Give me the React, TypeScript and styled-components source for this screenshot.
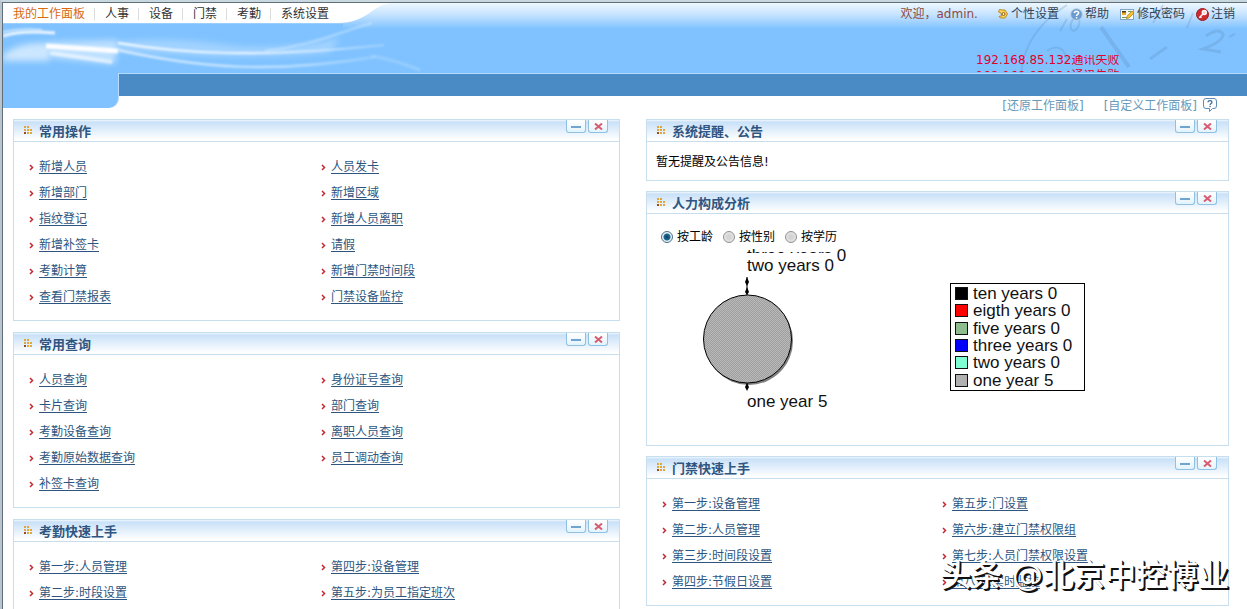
import React, { useState } from "react";
import styled, { createGlobalStyle } from "styled-components";

const GlobalStyle = createGlobalStyle`
  *, *::before, *::after { box-sizing: border-box; }
  body {
    margin: 0;
    background: #fff;
    color: #000;
    font: 12px/20px "DejaVu Sans", "Noto Sans CJK SC", sans-serif;
  }
  ul, h2, p, fieldset { margin: 0; padding: 0; border: 0; }
  ul { list-style: none; }
`;

const Frame = styled.div`
  height: 100vh;
  overflow: hidden;
  position: relative;
  border-top: 2px solid #c9d7de;
  border-left: 2px solid #b9c4cd;
`;

const Sheet = styled.div`
  min-height: 100%;
  border-top: 1px solid #5f707a;
  border-left: 1px solid #5f6e7c;
`;

const Header = styled.header`
  position: relative;
`;

const HeaderTop = styled.div`
  height: 70px;
  overflow: hidden;
  background: linear-gradient(#eff8ff 0, #c4e2ff 12px, #7fc2ff 26px, #7fc2ff);
`;

const LeftArt = styled.svg`
  position: absolute;
  left: 0;
  top: 0;
`;

const RightArt = styled.svg`
  position: absolute;
  right: 0;
  top: 0;
`;

const TopRow = styled.div`
  position: relative;
  display: flex;
  justify-content: space-between;
  height: 21px;
  padding: 1px 12px 0 0;
`;

const MainNav = styled.nav`
  display: flex;
  align-items: center;
`;

const NavLink = styled.a<{ $active?: boolean }>`
  display: block;
  padding: 0 9px 0 10px;
  line-height: 12px;
  color: ${(p) => (p.$active ? "#d8690f" : "#333")};
  text-decoration: none;
  & + & { border-left: 1px solid #dcdcdc; }
`;

const UserBar = styled.div`
  display: flex;
  align-items: center;
  gap: 11px;
`;

const Welcome = styled.span`
  color: #8c4a42;
  margin-right: 8px;
`;

const UserLink = styled.a`
  display: flex;
  align-items: center;
  gap: 2px;
  color: #2f4458;
  text-decoration: none;
`;

const Alerts = styled.ul`
  position: relative;
  width: 260px;
  height: 17px;
  margin: 31px 11px 0 auto;
  overflow: hidden;
  color: #e3002b;
  line-height: 15px;
  li { margin-top: -2px; height: 18px; }
`;

const BarRow = styled.div`
  position: relative;
  display: flex;
`;

const BrandTab = styled.div`
  width: 116px;
  height: 35px;
  background: #7fc2ff;
  border-right: 1px solid #b5dcff;
  border-bottom-right-radius: 10px;
`;

const BarColumn = styled.div`
  flex: 1;
`;

const SubBar = styled.div`
  height: 23px;
  border-top: 1px solid #b3daff;
  background: #4a8bc6;
`;

const BoardActions = styled.div`
  display: flex;
  height: 23px;
  padding-right: 30px;
  justify-content: flex-end;
`;

const BoardLink = styled.a`
  margin-right: 20px;
  color: #6899b9;
  text-decoration: none;
  &:last-of-type { margin-right: 6px; }
`;

const IconButton = styled.button`
  display: block;
  width: 14px;
  height: 14px;
  margin-top: 2px;
  padding: 0;
  border: 0;
  background: none;
  svg { display: block; }
`;

const Board = styled.main`
  display: grid;
  grid-template-columns: 607fr 583fr;
  gap: 26px;
  padding: 0 18px 0 10px;
`;

const Column = styled.div<{ $gap: number }>`
  display: flex;
  flex-direction: column;
  gap: ${(p) => p.$gap}px;
  min-width: 0;
`;

const PanelBox = styled.section`
  border: 1px solid #c6deee;
`;

const PanelHead = styled.header`
  display: flex;
  align-items: flex-start;
  height: 22px;
  padding: 0 11px 0 10px;
  border-bottom: 1px solid #c6deee;
  background: linear-gradient(#f0f7fe 0, #c9e1f8 2px, #fff 20px);
`;

const PanelTitle = styled.h2`
  flex: 1;
  display: flex;
  gap: 6px;
  color: #2f5580;
  font-size: 13px;
  line-height: 24px;
  svg { margin-top: 6px; }
`;

const WindowButton = styled.button`
  display: flex;
  align-items: center;
  justify-content: center;
  width: 20px;
  height: 13px;
  margin-left: 2px;
  padding: 1px 0 0;
  border: 1px solid #8fc1e3;
  border-top: 0;
  border-radius: 0 0 3px 3px;
  background: linear-gradient(#fff, #e3f3fd);
`;

const LinkGrid = styled.ul`
  display: grid;
  grid-template-columns: 1fr 1fr;
  grid-auto-rows: 26px;
  padding: 12px 6px 10px 15px;
`;

const LinkItem = styled.li`
  display: flex;
  align-items: center;
  gap: 5px;
  line-height: 26px;
`;

const ShortcutLink = styled.a`
  color: #2d5580;
  text-decoration: underline;
  text-underline-offset: 2px;
`;

const Notice = styled.p`
  padding: 10px 9px 8px;
`;

const Analysis = styled.div`
  padding: 13px 14px 0;
`;

const RadioRow = styled.fieldset`
  display: flex;
  gap: 10px;
`;

const RadioLabel = styled.label`
  display: flex;
  align-items: center;
  gap: 4px;
`;

const Radio = styled.input`
  appearance: none;
  width: 12px;
  height: 12px;
  margin: 0;
  border: 1px solid #8e8f8f;
  border-radius: 50%;
  background: radial-gradient(#d4d4d4 30%, #f4f4f4);
  &:checked {
    border-color: #4d6f86;
    background: radial-gradient(#0f3f5e 0, #1c6a97 3px, #e6f1f7 4px);
  }
`;

const ChartRow = styled.div`
  display: flex;
  height: 198px;
  svg { display: block; flex: none; }
`;

const Legend = styled.ul`
  display: grid;
  grid-auto-rows: 1fr;
  flex: none;
  width: 135px;
  height: 108px;
  margin: 36px 0 0 49px;
  padding: 1px 4px;
  border: 1px solid #000;
  font-family: "Liberation Sans", sans-serif;
  font-size: 17px;
  color: #111;
`;

const LegendItem = styled.li`
  display: flex;
  align-items: center;
  gap: 5px;
  min-height: 0;
  line-height: 17px;
  white-space: nowrap;
`;

const Swatch = styled.span<{ $color: string }>`
  width: 13px;
  height: 13px;
  border: 1px solid #111;
  background: ${(p) => p.$color};
`;

const Watermark = styled.div`
  position: absolute;
  right: 18px;
  bottom: 14px;
  color: #fff;
  font: 500 31px/40px "DejaVu Sans", "Noto Sans CJK SC", sans-serif;
  text-shadow: 1px 1px 0 #111, 2px 2px 0 #111;
  white-space: nowrap;
  pointer-events: none;
`;

const DotsIcon = () => (
  <svg width="9" height="9" viewBox="0 0 9 9" aria-hidden="true">
    <g fill="#e3a63c">
      <rect x="0" y="0" width="2" height="2" />
      <rect x="3" y="0" width="2" height="2" />
      <rect x="0" y="3" width="2" height="2" />
      <rect x="3" y="3" width="2" height="2" />
      <rect x="6" y="3" width="2" height="2" />
      <rect x="3" y="6" width="2" height="2" />
      <rect x="6" y="6" width="2" height="2" />
    </g>
    <rect x="0" y="6" width="2" height="2" fill="#9c4a1c" />
  </svg>
);

const Chevron = () => (
  <svg width="5" height="7" viewBox="0 0 5 7" aria-hidden="true">
    <path d="M1 1 L3.5 3.5 L1 6" fill="none" stroke="#c22a35" strokeWidth="1.5" />
  </svg>
);

const GearIcon = () => (
  <svg width="12" height="12" viewBox="0 0 12 12" aria-hidden="true">
    <path d="M2.500 1.500 L5 2 L8 2 L10.500 6 L8 10 L3.500 10 L2 8.500 L4.500 8 L4 5 L1.500 4z" fill="#ffd45a" stroke="#bd8a1c" />
    <circle cx="6.500" cy="6" r="1.500" fill="#fff3c4" stroke="#8f5f10" />
  </svg>
);

const HelpIcon = () => (
  <svg width="13" height="13" viewBox="0 0 13 13" aria-hidden="true">
    <circle cx="6.5" cy="6.5" r="5.8" fill="#6b9cd0" stroke="#b9cfe4" />
    <path d="M4.4 5 C4.4 2.6 8.6 2.6 8.6 5 C8.6 6.4 6.5 6.3 6.5 8" fill="none" stroke="#fff" strokeWidth="1.5" />
    <rect x="5.8" y="9" width="1.5" height="1.5" fill="#fff" />
  </svg>
);

const PasswordIcon = () => (
  <svg width="15" height="13" viewBox="0 0 15 13" aria-hidden="true">
    <rect x="0.5" y="1.5" width="13" height="10" fill="#f8fbf0" stroke="#7fa3c8" />
    <rect x="2" y="3" width="4" height="4" fill="#f0a92c" />
    <path d="M2 3h4v1.500h-4z" fill="#4d3a1c" />
    <path d="M2 9.5h5M8 3.5h4" stroke="#74975c" />
    <path d="M6.5 10.5 L7.2 8 L12 3 L14 5 L9 10z" fill="#f8c535" stroke="#b98219" strokeWidth="0.8" />
  </svg>
);

const LogoutIcon = () => (
  <svg width="13" height="13" viewBox="0 0 13 13" aria-hidden="true">
    <circle cx="6.5" cy="6.5" r="6" fill="#cf2b2f" stroke="#9b1c22" />
    <circle cx="8.3" cy="4.5" r="2" fill="#f7c9cb" stroke="#fff" strokeWidth="1.4" />
    <path d="M7 6 L3.2 9.7 M4.2 8.6 L5.4 9.8" stroke="#fff" strokeWidth="1.4" />
  </svg>
);

const BubbleIcon = () => (
  <svg width="14" height="14" viewBox="0 0 14 14" aria-hidden="true">
    <path d="M3 .5h8q2.5 0 2.5 2.5v5q0 2.5-2.500 2.5H9.500L6.500 13.500V10.500H3Q.5 10.500 .5 8V3Q.5 .5 3 .5z" fill="#fff" stroke="#5c8db8" />
    <path d="M5 4.200 C5 2 9 2 9 4.200 C9 5.500 7 5.300 7 7" fill="none" stroke="#35658f" strokeWidth="1.2" />
    <rect x="6.4" y="7.8" width="1.3" height="1.3" fill="#35658f" />
  </svg>
);

const SwooshArt = () => (
  <LeftArt width="460" height="105" viewBox="3 3 460 105" aria-hidden="true">
    <defs>
      <filter id="soft" x="-20%" y="-100%" width="140%" height="300%">
        <feGaussianBlur stdDeviation="3" />
      </filter>
      <filter id="fine" x="-20%" y="-100%" width="140%" height="300%">
        <feGaussianBlur stdDeviation="0.8" />
      </filter>
      <linearGradient id="fade" gradientUnits="userSpaceOnUse" x1="118" y1="0" x2="385" y2="0">
        <stop offset="0" stopColor="#fff" />
        <stop offset="0.6" stopColor="#dff0ff" />
        <stop offset="1" stopColor="#dff0ff" stopOpacity="0.3" />
      </linearGradient>
    </defs>
    <rect x="3" y="24" width="340" height="49" fill="#7fc2ff" />
    <path d="M3 3 H392 C372 4 368 23 338 23 H3z" fill="#fff" />
    <g fill="none" stroke="#fff">
      <path d="M3 54 Q25 40 50 44 V61 H3z" fill="#fff" stroke="none" opacity="0.6" filter="url(#soft)" />
      <path d="M48 42 L118 40 L115 64 L52 58z" fill="#fff" stroke="none" opacity="0.5" filter="url(#soft)" />
      <path d="M118 42 Q170 36 235 46 Q290 50 340 38 L330 52 Q240 62 118 50z" fill="#fff" stroke="none" opacity="0.28" filter="url(#soft)" />
      <path d="M3 36 Q20 30 55 33" strokeWidth="3" opacity="0.85" filter="url(#fine)" />
      <path d="M3 32 Q20 28 42 30" strokeWidth="1.5" opacity="0.7" filter="url(#fine)" />
      <path d="M46 46 L118 51" strokeWidth="5" opacity="0.95" filter="url(#fine)" />
      <path d="M50 53 Q80 57 112 62" strokeWidth="4" opacity="0.6" filter="url(#fine)" />
      <path d="M118 43 C185 54 260 58 384 45" stroke="url(#fade)" strokeWidth="2.2" filter="url(#fine)" />
      <path d="M118 50 C200 68 270 74 375 57" stroke="url(#fade)" strokeWidth="2.5" opacity="0.65" filter="url(#fine)" />
      <path d="M265 51 C310 46 340 32 372 23" strokeWidth="2" opacity="0.35" filter="url(#fine)" />
      <path d="M372 56 Q395 60 420 70" strokeWidth="3" opacity="0.18" filter="url(#fine)" />
    </g>
  </LeftArt>
);

const ClockArt = () => (
  <RightArt width="260" height="70" viewBox="0 0 260 70" aria-hidden="true">
    <g fill="none" stroke="#5f86b4" opacity="0.25">
      <path d="M34 70 Q38 28 80 2" strokeWidth="2" />
      <path d="M114 24 L142 64" strokeWidth="4" />
      <path d="M163 56 L180 44" strokeWidth="3" />
      <path d="M60 48 Q75 38 80 56" strokeWidth="2" />
      <ellipse cx="88" cy="21" rx="4" ry="7" transform="rotate(20 88 21)" strokeWidth="2" />
      <path d="M80 16 L73 28" strokeWidth="2" />
      <path d="M166 20 L176 2 M206 10 L200 25" strokeWidth="2" />
      <path d="M219 33 Q232 24 236 31 Q237 38 216 46 L234 49" strokeWidth="3" />
      <path d="M242 34 L248 31" strokeWidth="2" />
    </g>
  </RightArt>
);

const PieChart = () => (
  <svg width="240" height="198" viewBox="661 248 240 198" role="img" aria-label="one year 5">
    <defs>
      <pattern id="dither" width="2" height="2" patternUnits="userSpaceOnUse">
        <rect width="2" height="2" fill="#b9b9b9" />
        <rect width="1" height="1" fill="#9f9f9f" />
        <rect x="1" y="1" width="1" height="1" fill="#9f9f9f" />
      </pattern>
    </defs>
    <g fontFamily="Liberation Sans, sans-serif" fontSize="17" fill="#111">
      <text x="747" y="262">three years 0</text>
      <rect x="747" y="254" width="89" height="20" fill="#fff" />
      <text x="747" y="272">two years 0</text>
      <text x="747" y="408">one year 5</text>
    </g>
    <circle cx="749" cy="342" r="44" fill="#808080" />
    <circle cx="747.5" cy="340" r="44" fill="url(#dither)" stroke="#000" />
    <path d="M747 278 V296 M747 384 V390" stroke="#000" />
    <path d="M747 278l2 5-2 4-2-4zM747 288l2 5-2 3-2-3zM747 384l2 4-2 4-2-4z" fill="#000" />
  </svg>
);

function Panel({ title, children }: { title: string; children: React.ReactNode }) {
  return (
    <PanelBox>
      <PanelHead>
        <PanelTitle>
          <DotsIcon />
          {title}
        </PanelTitle>
        <WindowButton type="button" aria-label="最小化">
          <svg width="10" height="2" aria-hidden="true">
            <rect width="10" height="2" fill="#6fa5ce" />
          </svg>
        </WindowButton>
        <WindowButton type="button" aria-label="关闭">
          <svg width="9" height="7" viewBox="0 0 9 7" aria-hidden="true">
            <path d="M1 .5 L8 6.5 M8 .5 L1 6.5" stroke="#d95d70" strokeWidth="2" />
          </svg>
        </WindowButton>
      </PanelHead>
      {children}
    </PanelBox>
  );
}

function Shortcuts({ left, right }: { left: string[]; right: string[] }) {
  const cells = left.flatMap((name, i) => [name, right[i]]).filter(Boolean);
  return (
    <LinkGrid>
      {cells.map((name) => (
        <LinkItem key={name}>
          <Chevron />
          <ShortcutLink href="#">{name}</ShortcutLink>
        </LinkItem>
      ))}
    </LinkGrid>
  );
}

const navItems = ["我的工作面板", "人事", "设备", "门禁", "考勤", "系统设置"];

const legend = [
  { label: "ten years 0", color: "#000" },
  { label: "eigth years 0", color: "#f00" },
  { label: "five years 0", color: "#8fbc8f" },
  { label: "three years 0", color: "#00f" },
  { label: "two years 0", color: "#7fffd4" },
  { label: "one year 5", color: "#b0b0b0" },
];

const groupings = ["按工龄", "按性别", "按学历"];

export default function App() {
  const [grouping, setGrouping] = useState(groupings[0]);

  return (
    <>
      <GlobalStyle />
      <Frame>
        <Sheet>
          <Header>
            <HeaderTop>
              <SwooshArt />
              <ClockArt />
              <TopRow>
                <MainNav>
                  {navItems.map((item, i) => (
                    <NavLink key={item} href="#" $active={i === 0}>
                      {item}
                    </NavLink>
                  ))}
                </MainNav>
                <UserBar>
                  <Welcome>欢迎，admin.</Welcome>
                  <UserLink href="#"><GearIcon />个性设置</UserLink>
                  <UserLink href="#"><HelpIcon />帮助</UserLink>
                  <UserLink href="#"><PasswordIcon />修改密码</UserLink>
                  <UserLink href="#"><LogoutIcon />注销</UserLink>
                </UserBar>
              </TopRow>
              <Alerts>
                <li>192.168.85.132通讯失败</li>
                <li>192.168.85.134通讯失败</li>
              </Alerts>
            </HeaderTop>
            <BarRow>
              <BrandTab />
              <BarColumn>
                <SubBar />
                <BoardActions>
                  <BoardLink href="#">[还原工作面板]</BoardLink>
                  <BoardLink href="#">[自定义工作面板]</BoardLink>
                  <IconButton type="button" aria-label="帮助"><BubbleIcon /></IconButton>
                </BoardActions>
              </BarColumn>
            </BarRow>
          </Header>
          <Board>
            <Column $gap={11}>
              <Panel title="常用操作">
                <Shortcuts
                  left={["新增人员", "新增部门", "指纹登记", "新增补签卡", "考勤计算", "查看门禁报表"]}
                  right={["人员发卡", "新增区域", "新增人员离职", "请假", "新增门禁时间段", "门禁设备监控"]}
                />
              </Panel>
              <Panel title="常用查询">
                <Shortcuts
                  left={["人员查询", "卡片查询", "考勤设备查询", "考勤原始数据查询", "补签卡查询"]}
                  right={["身份证号查询", "部门查询", "离职人员查询", "员工调动查询"]}
                />
              </Panel>
              <Panel title="考勤快速上手">
                <Shortcuts
                  left={["第一步:人员管理", "第二步:时段设置"]}
                  right={["第四步:设备管理", "第五步:为员工指定班次"]}
                />
              </Panel>
            </Column>
            <Column $gap={10}>
              <Panel title="系统提醒、公告">
                <Notice>暂无提醒及公告信息!</Notice>
              </Panel>
              <Panel title="人力构成分析">
                <Analysis>
                  <RadioRow aria-label="人力构成分析">
                    {groupings.map((name) => (
                      <RadioLabel key={name}>
                        <Radio
                          type="radio"
                          name="grouping"
                          checked={grouping === name}
                          onChange={() => setGrouping(name)}
                        />
                        {name}
                      </RadioLabel>
                    ))}
                  </RadioRow>
                  <ChartRow>
                    <PieChart />
                    <Legend>
                      {legend.map((row) => (
                        <LegendItem key={row.label}>
                          <Swatch $color={row.color} />
                          {row.label}
                        </LegendItem>
                      ))}
                    </Legend>
                  </ChartRow>
                </Analysis>
              </Panel>
              <Panel title="门禁快速上手">
                <Shortcuts
                  left={["第一步:设备管理", "第二步:人员管理", "第三步:时间段设置", "第四步:节假日设置"]}
                  right={["第五步:门设置", "第六步:建立门禁权限组", "第七步:人员门禁权限设置", "第八步:实时监控"]}
                />
              </Panel>
            </Column>
          </Board>
        </Sheet>
        <Watermark>头条 @北京中控博业</Watermark>
      </Frame>
    </>
  );
}
